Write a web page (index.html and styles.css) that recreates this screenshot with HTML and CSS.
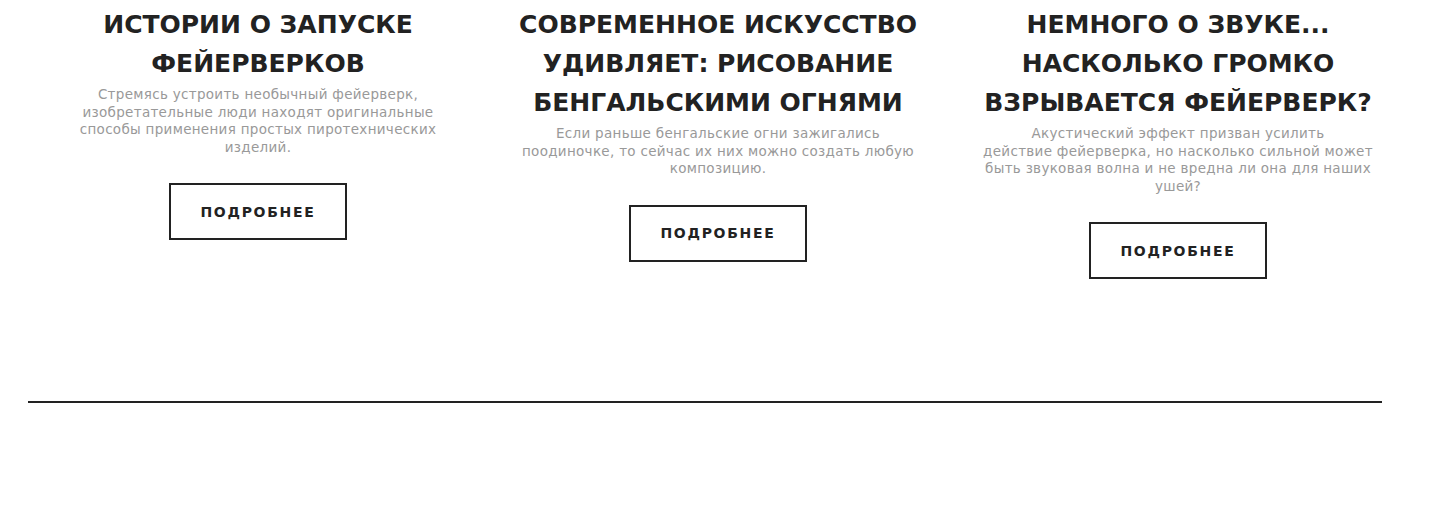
FILE: index.html
```html
<!DOCTYPE html>
<html lang="ru">
<head>
<meta charset="utf-8">
<title>Статьи</title>
<link rel="stylesheet" href="styles.css">
</head>
<body>
<main class="page">
  <section class="articles">
    <article class="article">
      <h2 class="article-title">Истории о запуске фейерверков</h2>
      <p class="article-text">Стремясь устроить необычный фейерверк, изобретательные люди находят оригинальные способы применения простых пиротехнических изделий.</p>
      <a class="more-btn" href="#">Подробнее</a>
    </article>
    <article class="article">
      <h2 class="article-title">Современное искусство удивляет: рисование бенгальскими огнями</h2>
      <p class="article-text">Если раньше бенгальские огни зажигались поодиночке, то сейчас их них можно создать любую композицию.</p>
      <a class="more-btn" href="#">Подробнее</a>
    </article>
    <article class="article">
      <h2 class="article-title">Немного о звуке... Насколько громко взрывается фейерверк?</h2>
      <p class="article-text">Акустический эффект призван усилить<br>действие фейерверка, но насколько сильной может быть звуковая волна и не вредна ли она для наших ушей?</p>
      <a class="more-btn" href="#">Подробнее</a>
    </article>
  </section>
  <hr class="divider">
</main>
</body>
</html>
```
FILE: styles.css
```css
* {
  box-sizing: border-box;
}

body {
  margin: 0;
  background: #fff;
  font-family: "DejaVu Sans", "Open Sans", sans-serif;
  color: #222;
}

.page {
  padding: 5px 0 0 28px;
}

.articles {
  display: grid;
  grid-template-columns: repeat(3, 460px);
}

.article {
  display: flex;
  flex-direction: column;
  align-items: center;
  text-align: center;
}

.article-title {
  width: 420px;
  margin: 0;
  font-size: 25px;
  font-weight: 700;
  line-height: 39px;
  text-transform: uppercase;
  color: #222;
}

.article-title + .article-text {
  margin-top: 3px;
}

.article-text {
  width: 400px;
  margin: 0 0 27px;
  font-size: 13.5px;
  letter-spacing: 0.3px;
  line-height: 17.5px;
  color: #999;
}

.more-btn {
  display: flex;
  align-items: center;
  justify-content: center;
  width: 178px;
  height: 57px;
  border: 2px solid #222;
  font-size: 14px;
  font-weight: 700;
  letter-spacing: 1.7px;
  text-transform: uppercase;
  text-decoration: none;
  color: #222;
}

.divider {
  width: 1354px;
  margin: 122px 0 0;
  border: 0;
  border-top: 2px solid #222;
}
```
